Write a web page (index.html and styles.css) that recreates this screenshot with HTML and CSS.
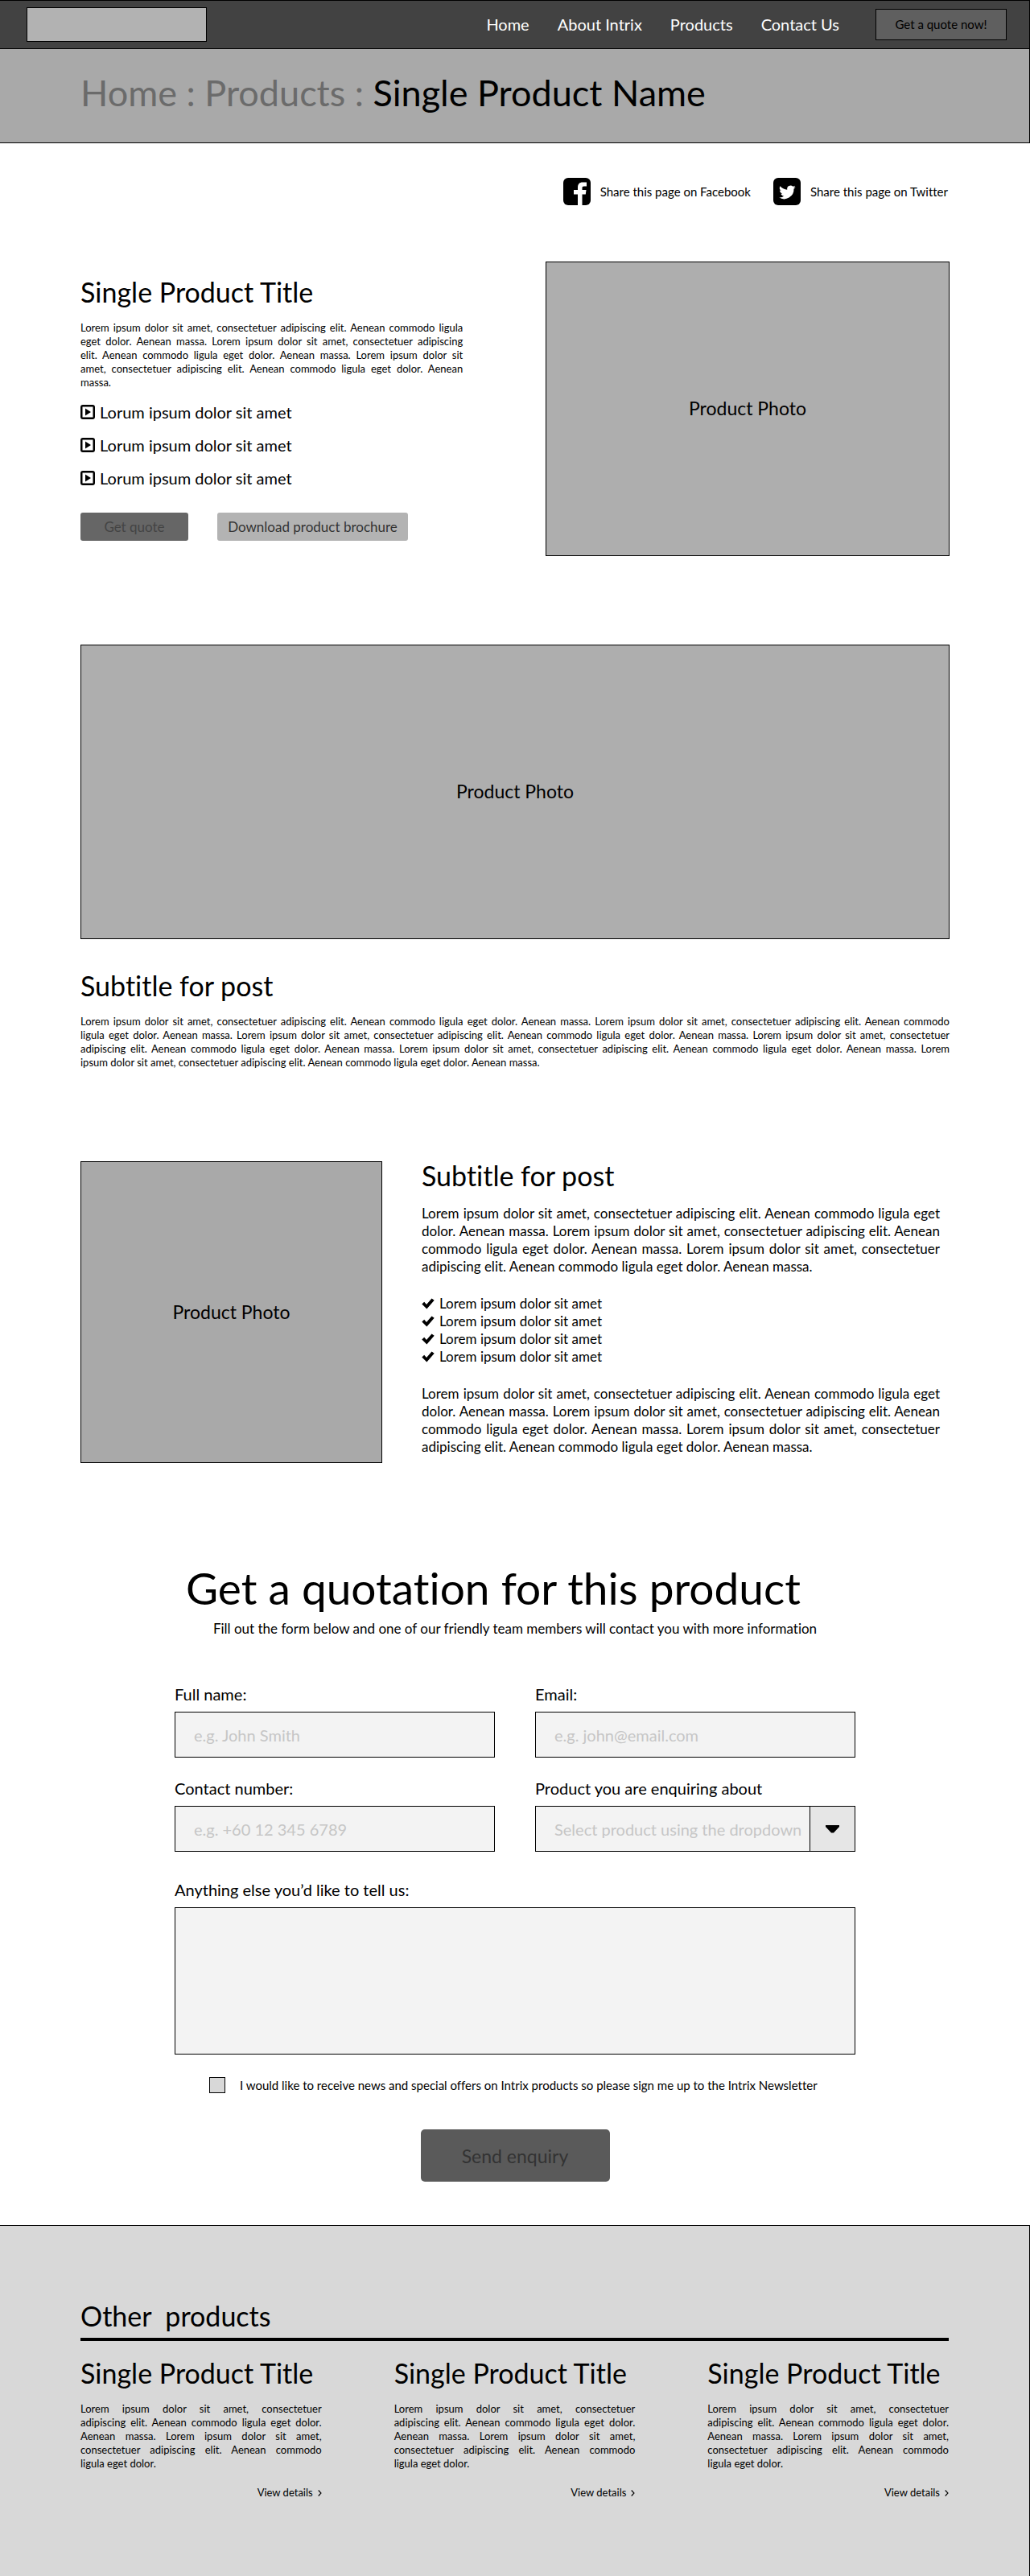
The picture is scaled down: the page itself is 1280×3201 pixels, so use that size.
FILE: index.html
```html
<!DOCTYPE html>
<html lang="en">
<head>
<meta charset="utf-8">
<meta name="viewport" content="width=device-width, initial-scale=1">
<title>Single Product Name</title>
<link rel="stylesheet" href="styles.css">
</head>
<body>
<svg class="sprite" aria-hidden="true">
  <symbol id="play" viewBox="0 0 18 18"><path fill-rule="evenodd" d="M3 0h12a3 3 0 0 1 3 3v12a3 3 0 0 1-3 3H3a3 3 0 0 1-3-3V3a3 3 0 0 1 3-3zM2.500 2.500v13h13v-13zM6 4.500l7 4.500-7 4.500z"/></symbol>
  <symbol id="check" viewBox="0 0 16 14"><path d="M0.300 7.500 3.200 4.800 6 8 12.500 0.600 15.700 2.800 6.400 13.500z"/></symbol>
  <symbol id="chevron" viewBox="0 0 5 8"><path d="M0.700 0.500 4 4 0.700 7.500" fill="none" stroke="#000" stroke-width="1.100"/></symbol>
</svg>

<header class="topbar">
  <a class="logo" href="#" aria-label="Intrix"></a>
  <nav class="nav">
    <a href="#">Home</a>
    <a href="#">About Intrix</a>
    <a href="#">Products</a>
    <a href="#">Contact Us</a>
  </nav>
  <button class="quote-now" type="button">Get a quote now!</button>
</header>

<div class="crumbs">
  <h1 class="crumbs-text"><a href="#">Home</a> <span class="sep">:</span> <a href="#">Products</a> <span class="sep">:</span> Single Product Name</h1>
</div>

<main class="page">
  <div class="share">
    <a href="#"><svg class="share-icon" viewBox="0 0 34 34"><rect width="34" height="34" rx="6"/><path fill="#fff" d="M18 34V20.500h-5V15h5v-3c0-4.500 2.500-6.500 6-6.500h5v5h-3.200c-1.800 0-2.300.8-2.300 2.300V15h5l-.7 5.500h-4.300V34z"/></svg>Share this page on Facebook</a>
    <a href="#"><svg class="share-icon" viewBox="0 0 34 34"><rect width="34" height="34" rx="6"/><path fill="#fff" transform="translate(7 7.500) scale(.94)" d="M22 4.200c-.8.400-1.700.6-2.600.7.900-.6 1.600-1.400 2-2.500-.9.500-1.800.9-2.900 1.100A4.500 4.500 0 0 0 10.900 7.600C7.100 7.400 3.800 5.600 1.600 2.900a4.500 4.500 0 0 0 1.400 6c-.7 0-1.400-.2-2-.6 0 2.200 1.500 4.100 3.600 4.500-.6.200-1.300.2-2 .1.600 1.800 2.200 3.100 4.200 3.100A9.100 9.100 0 0 1 0 17.900a12.800 12.800 0 0 0 19.700-11.400c.9-.6 1.700-1.400 2.300-2.300z"/></svg>Share this page on Twitter</a>
  </div>

  <section class="product">
    <div class="product-info">
      <h2>Single Product Title</h2>
      <p class="small">Lorem ipsum dolor sit amet, consectetuer adipiscing elit. Aenean commodo ligula eget dolor. Aenean massa. Lorem ipsum dolor sit amet, consectetuer adipiscing elit.&nbsp;Aenean commodo ligula eget dolor. Aenean massa. Lorem ipsum dolor sit amet,&nbsp;consectetuer adipiscing elit. Aenean commodo ligula eget dolor. Aenean massa.</p>
      <ul class="features">
        <li><svg><use href="#play"/></svg>Lorum ipsum dolor sit amet</li>
        <li><svg><use href="#play"/></svg>Lorum ipsum dolor sit amet</li>
        <li><svg><use href="#play"/></svg>Lorum ipsum dolor sit amet</li>
      </ul>
      <div class="actions">
        <button class="btn-dark" type="button">Get quote</button>
        <button class="btn-light" type="button">Download product brochure</button>
      </div>
    </div>
    <div class="photo photo-side">Product Photo</div>
  </section>

  <section class="feature">
    <div class="photo">Product Photo</div>
    <h2>Subtitle for post</h2>
    <p class="small">Lorem ipsum dolor sit amet, consectetuer adipiscing elit. Aenean commodo ligula eget dolor. Aenean massa. Lorem ipsum dolor sit amet, consectetuer adipiscing elit. Aenean commodo ligula&nbsp;eget dolor. Aenean massa. Lorem ipsum dolor sit amet, consectetuer adipiscing elit. Aenean commodo ligula eget dolor. Aenean massa. Lorem ipsum dolor sit amet, consectetuer adipiscing&nbsp;elit.&nbsp;Aenean commodo ligula eget dolor. Aenean massa. Lorem ipsum dolor sit amet, consectetuer adipiscing elit. Aenean commodo ligula eget dolor. Aenean massa. Lorem ipsum&nbsp;dolor&nbsp;sit amet, consectetuer adipiscing elit. Aenean commodo ligula eget dolor. Aenean massa.</p>
  </section>

  <section class="post">
    <div class="photo photo-square">Product Photo</div>
    <div class="post-body">
      <h2>Subtitle for post</h2>
      <p>Lorem ipsum dolor sit amet, consectetuer adipiscing elit. Aenean commodo ligula eget dolor. Aenean massa. Lorem ipsum dolor sit amet, consectetuer adipiscing elit. Aenean commodo ligula eget dolor. Aenean massa. Lorem ipsum dolor sit amet, consectetuer adipiscing elit. Aenean commodo ligula eget dolor. Aenean massa.</p>
      <ul class="checks">
        <li><svg><use href="#check"/></svg>Lorem ipsum dolor sit amet</li>
        <li><svg><use href="#check"/></svg>Lorem ipsum dolor sit amet</li>
        <li><svg><use href="#check"/></svg>Lorem ipsum dolor sit amet</li>
        <li><svg><use href="#check"/></svg>Lorem ipsum dolor sit amet</li>
      </ul>
      <p>Lorem ipsum dolor sit amet, consectetuer adipiscing elit. Aenean commodo ligula eget dolor. Aenean massa. Lorem ipsum dolor sit amet, consectetuer adipiscing elit. Aenean commodo ligula eget dolor. Aenean massa. Lorem ipsum dolor sit amet, consectetuer adipiscing elit. Aenean commodo ligula eget dolor. Aenean massa.</p>
    </div>
  </section>

  <form class="quote">
    <h2 class="quote-title">Get a quotation for this product</h2>
    <p class="quote-lead">Fill out the form below and one of our friendly team members will contact you with more information</p>
    <div class="fields">
      <div class="field">
        <label for="name">Full name:</label>
        <input id="name" type="text" placeholder="e.g. John Smith">
      </div>
      <div class="field">
        <label for="email">Email:</label>
        <input id="email" type="email" placeholder="e.g. john@email.com">
      </div>
      <div class="field">
        <label for="phone">Contact number:</label>
        <input id="phone" type="tel" placeholder="e.g. +60 12 345 6789">
      </div>
      <div class="field">
        <label for="product">Product you are enquiring about</label>
        <div class="dropdown">
          <select id="product"><option>Select product using the dropdown</option></select>
          <span class="dropdown-arrow"><svg viewBox="0 0 17 10"><path d="M0 2V0h17v2L10 9.500H7z"/></svg></span>
        </div>
      </div>
    </div>
    <div class="field message">
      <label for="message">Anything else you’d like to tell us:</label>
      <textarea id="message"></textarea>
    </div>
    <label class="optin"><input type="checkbox">I would like to receive news and special offers on Intrix products so please sign me up to the Intrix Newsletter</label>
    <button class="send" type="submit">Send enquiry</button>
  </form>
</main>

<section class="others">
  <h2 class="others-title">Other&nbsp; products</h2>
  <div class="cards">
    <article>
      <h2>Single Product Title</h2>
      <p class="small">Lorem ipsum dolor sit amet, consectetuer adipiscing&nbsp;elit. Aenean commodo ligula eget dolor. Aenean&nbsp;massa. Lorem ipsum dolor sit amet, consectetuer adipiscing elit. Aenean commodo ligula&nbsp;eget dolor.</p>
      <a class="details" href="#">View details<svg><use href="#chevron"/></svg></a>
    </article>
    <article>
      <h2>Single Product Title</h2>
      <p class="small">Lorem ipsum dolor sit amet, consectetuer adipiscing&nbsp;elit. Aenean commodo ligula eget dolor. Aenean&nbsp;massa. Lorem ipsum dolor sit amet, consectetuer adipiscing elit. Aenean commodo ligula&nbsp;eget dolor.</p>
      <a class="details" href="#">View details<svg><use href="#chevron"/></svg></a>
    </article>
    <article>
      <h2>Single Product Title</h2>
      <p class="small">Lorem ipsum dolor sit amet, consectetuer adipiscing&nbsp;elit. Aenean commodo ligula eget dolor. Aenean&nbsp;massa. Lorem ipsum dolor sit amet, consectetuer adipiscing elit. Aenean commodo ligula&nbsp;eget dolor.</p>
      <a class="details" href="#">View details<svg><use href="#chevron"/></svg></a>
    </article>
  </div>
</section>
</body>
</html>
```
FILE: styles.css
```css
* { box-sizing: border-box; }

body {
  margin: 0;
  background: #fff;
  color: #000;
  font-family: Lato, "Noto Sans", sans-serif;
  font-size: 17px;
  font-variant-ligatures: no-common-ligatures;
  line-height: 22px;
}

h1, h2, p, ul { margin: 0; padding: 0; font-weight: 400; }
ul { list-style: none; }
a { color: inherit; text-decoration: none; }
button, input, select, textarea { font: inherit; color: inherit; margin: 0; border-radius: 0; }
.sprite { display: none; }

h2 { font-size: 34px; line-height: 36px; }

.small {
  font-size: 13px;
  line-height: 17px;
  text-align: justify;
}

/* Top bar */
.topbar {
  display: flex;
  align-items: center;
  height: 61px;
  padding: 0 28px 0 33px;
  background: #424242;
  border: 1px solid #000;
  border-left: 0;
}
.logo {
  width: 224px;
  height: 43px;
  background: #b2b2b2;
  border: 1px solid #000;
}
.nav {
  display: flex;
  gap: 35px;
  margin-left: auto;
  padding-bottom: 2px;
  color: #fff;
  font-size: 20px;
}
.quote-now {
  width: 163px;
  height: 39px;
  margin-left: 45px;
  padding: 0 0 2px;
  background: #5f5f5f;
  border: 1px solid #000;
  font-size: 15px;
}

/* Breadcrumb */
.crumbs {
  padding: 26px 100px 34px;
  background: #a9a9a9;
  border: 1px solid #000;
  border-width: 0 1px 1px 0;
}
.crumbs-text { font-size: 45px; line-height: 56px; }
.crumbs-text a, .sep { color: #6b6b6b; }

.page { padding: 43px 100px 54px; }

.share {
  display: flex;
  justify-content: flex-end;
  gap: 28px;
  padding-right: 2px;
  font-size: 15px;
}
.share a { display: flex; align-items: center; gap: 12px; }
.share-icon { width: 34px; height: 34px; }

.photo {
  display: flex;
  align-items: center;
  justify-content: center;
  height: 366px;
  padding-bottom: 2px;
  background: #aeaeae;
  border: 1px solid #000;
  font-size: 23px;
}

/* Product summary */
.product {
  display: flex;
  justify-content: space-between;
  margin-top: 70px;
}
.product-info { width: 44%; padding-top: 20px; }
.photo-side { width: 502px; }
.product-info .small, .feature .small, .cards .small { margin-top: 18px; }
.features {
  display: grid;
  gap: 17px;
  margin-top: 16px;
  font-size: 20px;
  line-height: 24px;
}
.features li { display: flex; align-items: center; gap: 6px; }
.features svg { width: 18px; height: 18px; }
.actions { display: flex; gap: 36px; margin-top: 31px; }
.actions button {
  height: 35px;
  padding: 0;
  border: 0;
  border-radius: 3px;
}
.btn-dark { width: 134px; background: #666; color: #444; }
.btn-light { width: 237px; background: #b3b3b3; color: #333; }

/* Wide photo */
.feature { margin-top: 110px; }
.feature h2 { margin-top: 40px; }

/* Photo beside post */
.post {
  display: flex;
  gap: 49px;
  margin-top: 114px;
}
.photo-square { flex: none; width: 375px; height: 375px; background: #a9a9a9; }
.post-body { flex: 1; padding-right: 12px; }
.post-body p { margin-top: 18px; text-align: justify; }
.post-body .checks { margin-top: 24px; }
.post-body .checks + p { margin-top: 24px; }
.checks li { display: flex; align-items: center; gap: 6px; }
.checks svg { width: 16px; height: 14px; }

/* Quotation form */
.quote { width: 846px; max-width: 100%; margin: 123px auto 0; }
.quote-title {
  font-size: 55px;
  line-height: 64px;
  padding-left: 14px;
}
.quote-lead { margin-top: 8px; text-align: center; }
.fields {
  display: grid;
  grid-template-columns: 1fr 1fr;
  gap: 26px 50px;
  margin-top: 58px;
}
.field {
  display: flex;
  flex-direction: column;
  gap: 10px;
  font-size: 20px;
  line-height: 24px;
}
.field input, .field select, .field textarea {
  width: 100%;
  height: 57px;
  padding: 0 23px;
  background: #f3f3f3;
  border: 1px solid #000;
}
.field input::placeholder { color: #c6c6c6; opacity: 1; }
.dropdown { display: flex; }
.field select {
  flex: 1;
  min-width: 0;
  padding-right: 0;
  appearance: none;
  border-right: 0;
  color: #c6c6c6;
}
.dropdown-arrow {
  display: grid;
  place-items: center;
  width: 57px;
  background: #e6e6e6;
  border: 1px solid #000;
}
.dropdown-arrow svg { width: 17px; height: 10px; }
.message { margin-top: 35px; }
.field textarea { display: block; height: 183px; padding: 16px 23px; resize: none; }
.optin {
  display: flex;
  align-items: center;
  gap: 18px;
  margin: 28px 0 0 43px;
  font-size: 15px;
  line-height: 20px;
}
.optin input {
  appearance: none;
  width: 20px;
  height: 20px;
  background: #d8d8d8;
  border: 1px solid #000;
}
.send {
  display: block;
  width: 235px;
  height: 65px;
  margin: 45px auto 0;
  padding: 0;
  background: #5a5a5a;
  border: 0;
  border-radius: 5px;
  color: #333;
  font-size: 23px;
}

/* Other products */
.others {
  padding: 94px 100px 95px;
  background: #d8d8d8;
  border: 1px solid #000;
  border-width: 1px 1px 0 0;
}
.others-title { padding-bottom: 9px; border-bottom: 4px solid #000; }
.cards {
  display: grid;
  grid-template-columns: repeat(3, 1fr);
  gap: 90px;
  margin-top: 22px;
}
.details {
  display: flex;
  align-items: center;
  justify-content: flex-end;
  gap: 6px;
  margin-top: 19px;
  font-size: 13px;
  line-height: 17px;
}
.details svg { width: 5px; height: 8px; }
```
